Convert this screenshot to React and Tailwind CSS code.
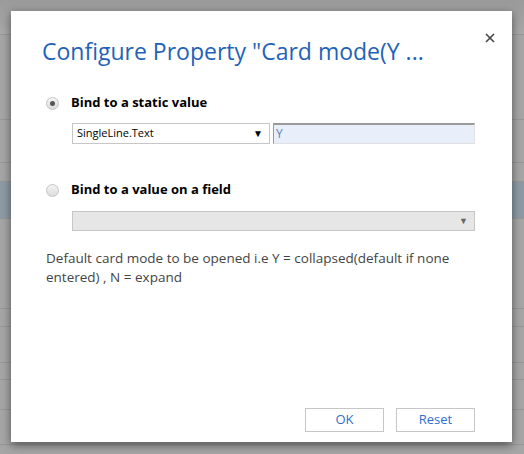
import React from 'react'

const font = { fontFamily: '"Open Sans", "Noto Sans", sans-serif' }

function Radio({ checked }) {
  return (
    <span className="flex h-[13px] w-[13px] shrink-0 items-center justify-center rounded-full border border-[#c4c4c4] bg-gradient-to-b from-[#f4f4f4] to-[#dcdcdc]">
      {checked && <span className="h-[5px] w-[5px] rounded-full bg-[#555]" />}
    </span>
  )
}

function Backdrop() {
  const rows = [
    { h: 'h-[35px]', cls: 'bg-gradient-to-b from-[#9a9a9a] to-[#a9a9a9]' },
    { h: 'h-[85px]', cls: '' },
    { h: 'h-[43px]', cls: '' },
    { h: 'h-[19px]', cls: '' },
    { h: 'h-[37px]', cls: 'bg-[#8e9ba6]' },
    { h: 'h-[90px]', cls: '' },
    { h: 'h-[18px]', cls: '' },
    { h: 'h-[36px]', cls: '' },
    { h: 'h-[17px]', cls: '' },
    { h: 'h-[30px]', cls: '' },
    { h: 'h-[35px]', cls: '' },
  ]
  return (
    <div className="flex flex-col">
      {rows.map((r, i) => (
        <div key={i} className={`${r.h} ${r.cls} border-b border-[#979797]`} />
      ))}
    </div>
  )
}

export default function App() {
  return (
    <div className="relative h-[454px] w-[524px] overflow-hidden bg-[#a6a6a6]" style={font}>
      <Backdrop />

      <div className="absolute left-[11px] top-[11px] flex h-[431px] w-[501px] flex-col bg-white shadow-[0_3px_9px_rgba(0,0,0,0.5)]">
        <button className="absolute right-[15px] top-[20px] p-[2px] text-[#444]">
          <svg width="10" height="10" viewBox="0 0 10 10">
            <path d="M1 1 L9 9 M9 1 L1 9" stroke="currentColor" strokeWidth="1.6" />
          </svg>
        </button>

        <h1 className="ml-[31px] mt-[24px] text-[23px] font-normal leading-[32px] text-[#1f63b8]">
          Configure Property "Card mode(Y ...
        </h1>

        <div className="ml-[35px] mr-[37px] mt-[26px] flex flex-col">
          <label className="flex h-[20px] items-center">
            <Radio checked />
            <span className="ml-[12px] text-[13px] font-bold text-black">Bind to a static value</span>
          </label>

          <div className="ml-[26px] mt-[10px] flex gap-[3px]">
            <div className="flex h-[21px] w-[198px] items-center justify-between border border-[#c6c6c6] bg-white pl-[4px] pr-[6px]">
              <span className="text-[11px] text-black">SingleLine.Text</span>
              <span className="text-[10px] text-black">▼</span>
            </div>
            <div className="flex h-[21px] flex-1 items-center border-b border-l border-r border-t-2 border-b-[#e0e0e0] border-l-[#9a9a9a] border-r-[#e0e0e0] border-t-[#9a9a9a] bg-[#e8effb] pl-[2px]">
              <span className="text-[12px] text-[#5b7fb5]">Y</span>
            </div>
          </div>

          <label className="mt-[36px] flex h-[20px] items-center">
            <Radio />
            <span className="ml-[12px] text-[13px] font-bold text-black">Bind to a value on a field</span>
          </label>

          <div className="ml-[26px] mt-[11px] flex h-[20px] items-center justify-end border border-[#c6c6c6] bg-[#e6e6e6] pr-[6px]">
            <span className="text-[9px] text-[#666]">▼</span>
          </div>

          <p className="mt-[18px] text-[13.5px] leading-[19px] text-[#444]">
            Default card mode to be opened i.e Y = collapsed(default if none entered) , N = expand
          </p>
        </div>

        <div className="flex-1" />

        <div className="mb-[10px] mr-[37px] flex justify-end gap-[12px]">
          <button className="h-[24px] w-[79px] border border-[#c6c6c6] bg-white text-[13px] text-[#2f6fd0]">OK</button>
          <button className="h-[24px] w-[79px] border border-[#c6c6c6] bg-white text-[13px] text-[#2f6fd0]">Reset</button>
        </div>
      </div>
    </div>
  )
}
